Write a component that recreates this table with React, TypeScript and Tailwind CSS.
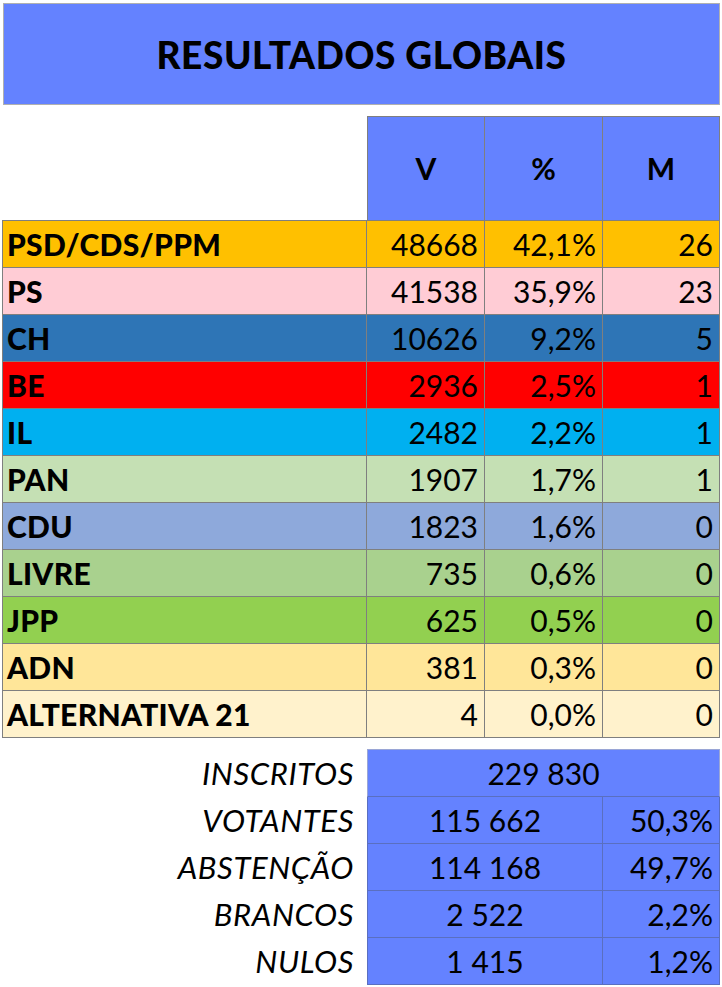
import React from "react";

type Party = {
  name: string;
  votes: string;
  pct: string;
  seats: string;
  bg: string;
};

const parties: Party[] = [
  { name: "PSD/CDS/PPM", votes: "48668", pct: "42,1%", seats: "26", bg: "bg-[#ffc000]" },
  { name: "PS", votes: "41538", pct: "35,9%", seats: "23", bg: "bg-[#ffccd5]" },
  { name: "CH", votes: "10626", pct: "9,2%", seats: "5", bg: "bg-[#2e75b6]" },
  { name: "BE", votes: "2936", pct: "2,5%", seats: "1", bg: "bg-[#ff0000]" },
  { name: "IL", votes: "2482", pct: "2,2%", seats: "1", bg: "bg-[#00b0f0]" },
  { name: "PAN", votes: "1907", pct: "1,7%", seats: "1", bg: "bg-[#c5e0b4]" },
  { name: "CDU", votes: "1823", pct: "1,6%", seats: "0", bg: "bg-[#8ea9db]" },
  { name: "LIVRE", votes: "735", pct: "0,6%", seats: "0", bg: "bg-[#a9d18e]" },
  { name: "JPP", votes: "625", pct: "0,5%", seats: "0", bg: "bg-[#92d050]" },
  { name: "ADN", votes: "381", pct: "0,3%", seats: "0", bg: "bg-[#ffe699]" },
  { name: "ALTERNATIVA 21", votes: "4", pct: "0,0%", seats: "0", bg: "bg-[#fff2cc]" },
];

type Summary = {
  label: string;
  value: string;
  pct?: string;
};

const summary: Summary[] = [
  { label: "INSCRITOS", value: "229 830" },
  { label: "VOTANTES", value: "115 662", pct: "50,3%" },
  { label: "ABSTENÇÃO", value: "114 168", pct: "49,7%" },
  { label: "BRANCOS", value: "2 522", pct: "2,2%" },
  { label: "NULOS", value: "1 415", pct: "1,2%" },
];

const font = { fontFamily: "Lato, 'Open Sans', sans-serif" };

export default function App() {
  return (
    <div className="w-[722px] h-[987px] bg-white text-black overflow-hidden" style={font}>
      {/* title */}
      <div className="ml-[3px] mt-[3px] w-[717px] h-[102px] bg-[#6482ff] border border-[#b0b0b0] flex items-center justify-center">
        <h1 className="text-[37px] font-black tracking-[0.6px] leading-none">RESULTADOS GLOBAIS</h1>
      </div>

      {/* header */}
      <div className="mt-[11px] grid grid-cols-[365px_118px_118px_117px] ml-[2px]">
        <div />
        {["V", "%", "M"].map((h, i) => (
          <div
            key={h}
            className={`h-[104px] bg-[#6482ff] border-t border-[#7f7f7f] flex items-center justify-center text-[30px] font-bold ${
              i === 0 ? "border-l border-r" : "border-r"
            }`}
          >
            {h}
          </div>
        ))}
      </div>

      {/* parties */}
      <div className="ml-[2px] w-[718px] border-t border-l border-[#7f7f7f]">
        {parties.map((p) => (
          <div key={p.name} className={`grid grid-cols-[364px_118px_118px_117px] h-[47px] ${p.bg} text-[30px]`}>
            <div className="border-r border-b border-[#7f7f7f] flex items-center pl-[4px] font-black text-[30px] tracking-[0.3px]">
              {p.name}
            </div>
            <div className="border-r border-b border-[#7f7f7f] flex items-center justify-end pr-[6px]">{p.votes}</div>
            <div className="border-r border-b border-[#7f7f7f] flex items-center justify-end pr-[6px]">{p.pct}</div>
            <div className="border-r border-b border-[#7f7f7f] flex items-center justify-end pr-[6px]">{p.seats}</div>
          </div>
        ))}
      </div>

      {/* summary */}
      <div className="mt-[11px] ml-[2px]">
        {summary.map((s, i) => (
          <div key={s.label} className={`grid grid-cols-[365px_236px_117px] text-[30px] ${i === 0 ? "h-[48px]" : "h-[47px]"}`}>
            <div className="flex items-center justify-end pr-[13px] italic text-[31px] tracking-[0.6px]">{s.label}</div>
            {s.pct ? (
              <>
                <div className="bg-[#6482ff] border-l border-r border-b border-[#5a6fc0] flex items-center justify-center">
                  {s.value}
                </div>
                <div className="bg-[#6482ff] border-r border-b border-[#5a6fc0] flex items-center justify-end pr-[6px]">
                  {s.pct}
                </div>
              </>
            ) : (
              <div className="col-span-2 bg-[#6482ff] border border-[#9aa6d6] border-b-[#5a6fc0] flex items-center justify-center">
                {s.value}
              </div>
            )}
          </div>
        ))}
      </div>
    </div>
  );
}
